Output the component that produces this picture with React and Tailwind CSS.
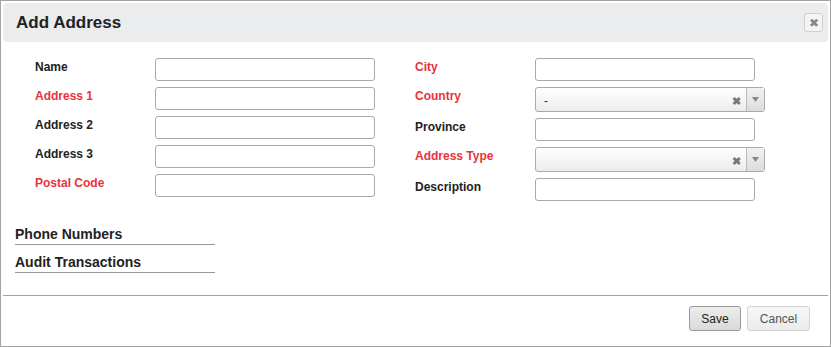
import React from "react";

const FONT = { fontFamily: '"Liberation Sans", Arial, sans-serif' };

function Label({ text, required }) {
  return (
    <div
      className={`w-[120px] shrink-0 pt-[2px] text-[12px] font-bold leading-[14px] ${
        required ? "text-[#e8323c]" : "text-[#222]"
      }`}
    >
      {text}
    </div>
  );
}

function TextRow({ label, required }) {
  return (
    <div className="flex items-start">
      <Label text={label} required={required} />
      <div className="h-[23px] w-[220px] rounded-[3px] border border-[#a9a9a9] bg-white" />
    </div>
  );
}

function SelectRow({ label, required, value }) {
  return (
    <div className="flex items-start">
      <Label text={label} required={required} />
      <div className="flex h-[25px] w-[230px] rounded-[3px] border border-[#aaa] bg-gradient-to-b from-white to-[#ececec]">
        <div className="flex flex-1 items-center justify-between pl-[8px] pr-[5px] pt-[3px]">
          <span className="text-[12px] text-[#333]">{value}</span>
          <span className="text-[11px] font-bold leading-none text-[#777]">✖</span>
        </div>
        <div className="flex w-[18px] items-center justify-center border-l border-[#bbb] bg-gradient-to-b from-[#f2f2f2] to-[#dcdcdc]">
          <svg width="7" height="5" viewBox="0 0 7 5">
            <path d="M0 0h7L3.5 5z" fill="#888" />
          </svg>
        </div>
      </div>
    </div>
  );
}

function Section({ title }) {
  return (
    <div className="w-[200px] border-b border-[#999] pb-[1px] text-[14px] font-bold leading-[17px] text-[#222]">
      {title}
    </div>
  );
}

export default function App() {
  return (
    <div
      style={FONT}
      className="flex h-[347px] w-[831px] flex-col border border-[#a3a3a3] bg-white"
    >
      {/* header */}
      <div className="mx-[2px] mt-[2px] flex h-[39px] items-center justify-between rounded-[4px] bg-[#ebecee] pl-[13px] pr-[5px]">
        <span className="text-[17px] font-bold text-[#222]">Add Address</span>
        <button
          type="button"
          className="flex h-[19px] w-[19px] items-center justify-center rounded-[3px] border border-[#cfcfcf] bg-[#f4f4f4] text-[12px] leading-none text-[#888]"
        >
          ✖
        </button>
      </div>

      {/* form */}
      <div className="flex pl-[34px] pt-[16px]">
        <div className="flex w-[380px] flex-col gap-[6px]">
          <TextRow label="Name" />
          <TextRow label="Address 1" required />
          <TextRow label="Address 2" />
          <TextRow label="Address 3" />
          <TextRow label="Postal Code" required />
        </div>
        <div className="flex flex-col gap-[6px]">
          <TextRow label="City" required />
          <SelectRow label="Country" required value="-" />
          <TextRow label="Province" />
          <SelectRow label="Address Type" required value="" />
          <TextRow label="Description" />
        </div>
      </div>

      <div className="flex flex-col gap-[9px] pl-[14px] pt-[25px]">
        <Section title="Phone Numbers" />
        <Section title="Audit Transactions" />
      </div>

      <div className="mx-[2px] mt-auto border-t border-[#a3a3a3]">
        <div className="flex justify-end gap-[6px] pb-[15px] pr-[18px] pt-[10px]">
          <button
            type="button"
            className="h-[25px] w-[52px] rounded-[3px] border border-[#999] bg-gradient-to-b from-[#ececec] to-[#dadada] text-[12px] text-[#222]"
          >
            Save
          </button>
          <button
            type="button"
            className="h-[25px] w-[63px] rounded-[3px] border border-[#d3d3d3] bg-gradient-to-b from-[#f7f7f7] to-[#ececec] text-[12px] text-[#555]"
          >
            Cancel
          </button>
        </div>
      </div>
    </div>
  );
}
